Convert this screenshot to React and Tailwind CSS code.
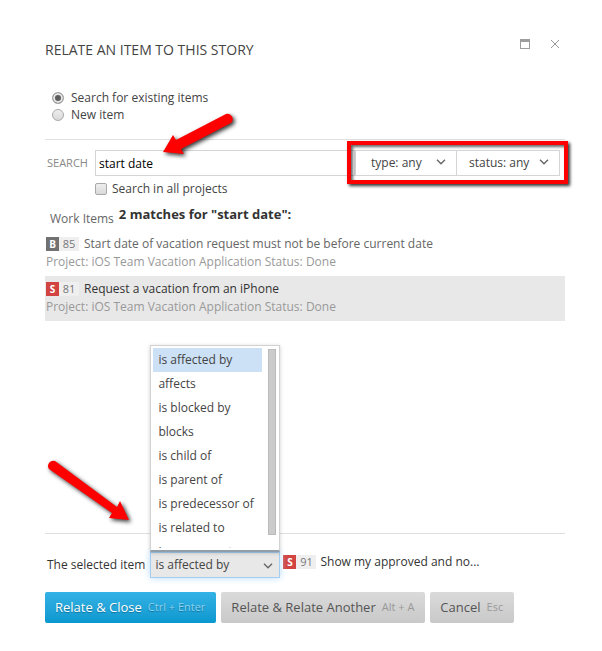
import React, { useState } from 'react';
import clsx from 'clsx';

const RELATIONS = [
  'is affected by',
  'affects',
  'is blocked by',
  'blocks',
  'is child of',
  'is parent of',
  'is predecessor of',
  'is related to',
  'is successor to',
];

const ITEMS = [
  { id: 85, type: 'B', title: 'Start date of vacation request must not be before current date', project: 'iOS Team Vacation Application', status: 'Done' },
  { id: 81, type: 'S', title: 'Request a vacation from an iPhone', project: 'iOS Team Vacation Application', status: 'Done' },
];

const ItemBadge = ({ type, id }) => (
  <span className="inline-flex h-[14px] shrink-0 text-[11px] leading-[14px]">
    <span className={clsx('w-[13px] text-center text-[10px] font-bold text-white', type === 'B' ? 'bg-[#717171]' : 'bg-[#d24441]')}>
      {type}
    </span>
    <span className="w-5 bg-[#efefef] text-center text-[#777]">{id}</span>
  </span>
);

const Chevron = ({ className }) => (
  <svg className={clsx('pointer-events-none absolute', className)} width="10" height="6" viewBox="0 0 10 6" fill="none" stroke="#666" strokeWidth="1.4">
    <path d="M1 0.8 L5 4.8 L9 0.8" />
  </svg>
);

const Arrow = ({ d, className, width, height }) => (
  <svg
    className={clsx('pointer-events-none absolute z-20 overflow-visible drop-shadow-[2px_2px_2px_rgba(0,0,0,0.8)]', className)}
    width={width}
    height={height}
    viewBox={`0 0 ${width} ${height}`}
    fill="#fe0000"
    aria-hidden="true"
  >
    <path d={d} />
  </svg>
);

const RadioOption = ({ label, value, checked, onChange }) => (
  <label className="flex h-[17px] items-center gap-[7px]">
    <input
      type="radio"
      name="mode"
      value={value}
      checked={checked}
      onChange={() => onChange(value)}
      className="size-3 appearance-none rounded-full border border-[#a9a9a9] bg-linear-to-b from-[#eee] to-[#d9d9d9] checked:bg-none checked:bg-[#5c5c5c] checked:shadow-[inset_0_0_0_2px_#e6e6e6]"
    />
    {label}
  </label>
);

const FilterSelect = ({ label, options, className, selectClass }) => (
  <div className={clsx('relative', className)}>
    <select
      aria-label={label}
      className={clsx('h-[26px] w-full appearance-none border border-[#d5d5d5] bg-white pr-6', selectClass)}
    >
      {options.map((o) => (
        <option key={o}>{`${label}: ${o}`}</option>
      ))}
    </select>
    <Chevron className="top-[9px] right-[11px]" />
  </div>
);

const App = () => {
  const [mode, setMode] = useState('existing');
  const [query, setQuery] = useState('start date');
  const [selected, setSelected] = useState(81);
  const [relation, setRelation] = useState('is affected by');

  return (
    <main className="bg-white pt-[37px] pr-[37px] pb-7 pl-[45px] font-['Open_Sans',sans-serif] text-[12px] text-[#444]">
      <header className="flex h-6 items-center">
        <h1 className="flex-1 text-[14px] text-[#444]">RELATE AN ITEM TO THIS STORY</h1>
        <div className="flex items-center gap-5 pr-[5px] pb-[10px]">
          <button type="button" aria-label="Maximize">
            <svg width="10" height="10" viewBox="0 0 10 10" fill="none" stroke="#9d9d9d" shapeRendering="crispEdges">
              <path d="M0.5 0.5 H9.5 V9.5 H0.5 Z M0 1.5 H10 M0 2.5 H10" />
            </svg>
          </button>
          <button type="button" aria-label="Close">
            <svg width="10" height="10" viewBox="0 0 10 10" fill="none" stroke="#999">
              <path d="M1 1 L9 9 M9 1 L1 9" />
            </svg>
          </button>
        </div>
      </header>

      <div role="radiogroup" aria-label="Item source" className="mt-7 border-b border-[#e0e0e0] pb-4 pl-[7px]">
        <RadioOption label="Search for existing items" value="existing" checked={mode === 'existing'} onChange={setMode} />
        <RadioOption label="New item" value="new" checked={mode === 'new'} onChange={setMode} />
      </div>

      <div className="mt-[10px] mr-[5px] flex items-center">
        <label htmlFor="search" className="w-[50px] pl-[2px] text-[11px] text-[#888]">SEARCH</label>
        <div className="relative flex-1">
          <input
            id="search"
            type="text"
            value={query}
            onChange={(e) => setQuery(e.target.value)}
            className="block h-[26px] w-full border border-[#d5d5d5] px-[3px] text-black"
          />
          <Arrow
            className="-top-[38px] left-[66px]"
            width={76}
            height={44}
            d="M2 40 L12 23 L15 28 L65 2 A5.3 5.3 0 0 1 70 11 L20 37 L23 42 Z"
          />
        </div>
        <div className="relative flex">
          <FilterSelect label="type" options={['any', 'story', 'bug']} className="w-[102px]" selectClass="pl-[15px]" />
          <FilterSelect label="status" options={['any', 'open', 'done']} className="-ml-px w-[104px]" selectClass="pl-3" />
          <div className="pointer-events-none absolute -inset-x-2 -top-[9px] -bottom-2 border-4 border-[#fe0000] shadow-[2px_2px_3px_rgba(0,0,0,0.8),inset_2px_2px_3px_rgba(0,0,0,0.6)]" />
        </div>
      </div>

      <label className="mt-1 ml-[50px] flex h-[18px] w-fit items-center gap-[5px]">
        <input type="checkbox" className="size-3 appearance-none rounded-xs border border-[#a9a9a9] bg-linear-to-b from-[#eee] to-[#d9d9d9] checked:bg-none checked:bg-[#5c5c5c]" />
        Search in all projects
      </label>

      <div className="mt-2 flex h-[25px] items-start gap-[5px] pl-[5px] leading-[17px]">
        <span className="pt-1 text-[#666]">Work Items</span>
        <h2 className="text-[13px] font-bold text-[#333]">2 matches for "start date":</h2>
      </div>

      <section className="relative min-h-[302px]">
        <ul>
          {ITEMS.map((item) => (
            <li
              key={item.id}
              onClick={() => setSelected(item.id)}
              className={clsx('px-px pt-1 pb-[5px] leading-[18px]', selected === item.id ? 'bg-[#e8e8e8] text-[#333]' : 'text-[#666]')}
            >
              <div className="flex items-center gap-[5px]">
                <ItemBadge type={item.type} id={item.id} />
                <span>{item.title}</span>
              </div>
              <p className="text-[#999]">Project: {item.project} Status: {item.status}</p>
            </li>
          ))}
        </ul>
        <Arrow
          className="bottom-[10px] left-0"
          width={86}
          height={66}
          d="M10 4 A5.3 5.3 0 0 0 4 12 L67 56 L64 61 L84 63 L75 44 L72 50 Z"
        />
      </section>

      <footer className="border-t border-[#e0e0e0] pt-[18px]">
        <div className="flex items-center">
          <label htmlFor="relation" className="pl-[2px] text-[#333]">The selected item</label>
          <div className="relative ml-[5px] w-[130px]">
            <select
              id="relation"
              value={relation}
              onChange={(e) => setRelation(e.target.value)}
              className="block h-[26px] w-full appearance-none border border-[#a5cdf0] bg-[#e8e8e8] pl-1 shadow-[0_0_7px_#b5dcff] outline-none"
            >
              {RELATIONS.map((r) => (
                <option key={r}>{r}</option>
              ))}
            </select>
            <Chevron className="top-[11px] right-[7px]" />

            {/* Open relation list */}
            <div className="absolute bottom-full left-0 z-10 flex w-full items-start justify-between border border-b-2 border-[#d2d2d2] border-b-[#929daa] bg-white pt-[2px] pr-[3px] pb-[2px] pl-[2px] shadow-[0_1px_4px_rgba(0,0,0,0.2)]">
              <ul role="listbox" aria-label="Relation" className="h-[200px] w-[109px] overflow-hidden">
                {RELATIONS.map((r) => (
                  <li
                    key={r}
                    role="option"
                    aria-selected={r === relation}
                    onClick={() => setRelation(r)}
                    className={clsx('pl-[5px] leading-6 whitespace-nowrap', r === relation && 'bg-[#cce0f6]')}
                  >
                    {r}
                  </li>
                ))}
              </ul>
              <div className="mt-px h-[186px] w-2 border border-[#bbb] bg-[#cbcbcb]" />
            </div>
          </div>
          <div className="ml-[3px] flex items-center gap-1 pb-[6px] text-[#333]">
            <ItemBadge type="S" id={91} />
            <span>Show my approved and no...</span>
          </div>
        </div>

        <div className="mt-[14px] flex gap-[5px]">
          <button type="button" className="flex h-[31px] items-center gap-[6px] rounded-xs bg-linear-to-b from-[#33b2e6] to-[#0798cf] pr-[11px] pl-[10px] text-[13px] whitespace-nowrap text-white text-shadow-[0_1px_1px_rgba(0,0,0,0.3)]">
            Relate &amp; Close <span className="text-[11px] text-[#8bd4f2]">Ctrl + Enter</span>
          </button>
          <button type="button" className="flex h-[31px] items-center gap-[6px] rounded-xs bg-linear-to-b from-[#dadada] to-[#c9c9c9] pr-[11px] pl-[10px] text-[13px] whitespace-nowrap text-[#555]">
            Relate &amp; Relate Another <span className="text-[11px] text-[#999]">Alt + A</span>
          </button>
          <button type="button" className="flex h-[31px] items-center gap-[6px] rounded-xs bg-linear-to-b from-[#dadada] to-[#c9c9c9] pr-[11px] pl-[10px] text-[13px] whitespace-nowrap text-[#555]">
            Cancel <span className="text-[11px] text-[#999]">Esc</span>
          </button>
        </div>
      </footer>
    </main>
  );
};

export default App;
